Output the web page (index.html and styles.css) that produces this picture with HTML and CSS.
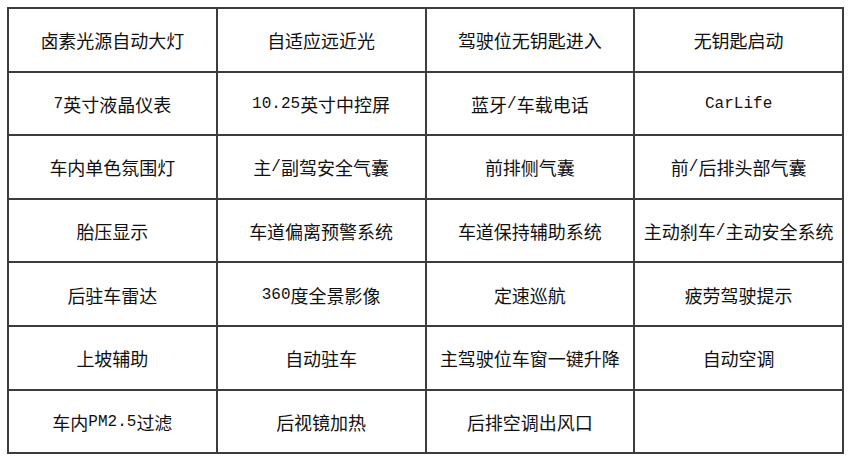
FILE: index.html
```html
<!DOCTYPE html>
<html lang="zh-CN">
<head>
<meta charset="utf-8">
<title>配置</title>
<link rel="stylesheet" href="styles.css">
</head>
<body>
<div class="table">
  <div class="cell">卤素光源自动大灯</div>
  <div class="cell">自适应远近光</div>
  <div class="cell">驾驶位无钥匙进入</div>
  <div class="cell">无钥匙启动</div>

  <div class="cell"><span class="lat">7</span>英寸液晶仪表</div>
  <div class="cell"><span class="lat">10.25</span>英寸中控屏</div>
  <div class="cell">蓝牙<span class="lat">/</span>车载电话</div>
  <div class="cell"><span class="lat">CarLife</span></div>

  <div class="cell">车内单色氛围灯</div>
  <div class="cell">主<span class="lat">/</span>副驾安全气囊</div>
  <div class="cell">前排侧气囊</div>
  <div class="cell">前<span class="lat">/</span>后排头部气囊</div>

  <div class="cell">胎压显示</div>
  <div class="cell">车道偏离预警系统</div>
  <div class="cell">车道保持辅助系统</div>
  <div class="cell">主动刹车<span class="lat">/</span>主动安全系统</div>

  <div class="cell">后驻车雷达</div>
  <div class="cell"><span class="lat">360</span>度全景影像</div>
  <div class="cell">定速巡航</div>
  <div class="cell">疲劳驾驶提示</div>

  <div class="cell">上坡辅助</div>
  <div class="cell">自动驻车</div>
  <div class="cell">主驾驶位车窗一键升降</div>
  <div class="cell">自动空调</div>

  <div class="cell">车内<span class="lat">PM2.5</span>过滤</div>
  <div class="cell">后视镜加热</div>
  <div class="cell">后排空调出风口</div>
  <div class="cell"></div>
</div>
</body>
</html>
```

FILE: styles.css
```css
html, body {
  margin: 0;
  padding: 0;
  background: #ffffff;
}

body {
  font-family: "Noto Sans CJK SC", "Liberation Serif", sans-serif;
  color: #111111;
}

.table {
  margin: 7px 0 0 7px;
  width: 837px;
  box-sizing: border-box;
  display: grid;
  grid-template-columns: repeat(4, 1fr);
  grid-auto-rows: 63.6px;
  border-top: 2px solid #3c3c3c;
  border-left: 2px solid #3c3c3c;
}

.cell {
  display: flex;
  align-items: center;
  justify-content: center;
  border-right: 2px solid #3c3c3c;
  border-bottom: 2px solid #3c3c3c;
  font-size: 18px;
  line-height: 1;
  white-space: nowrap;
  padding-top: 1px;
}

.lat {
  font-family: "Liberation Mono", monospace;
  font-size: 16px;
}
```
